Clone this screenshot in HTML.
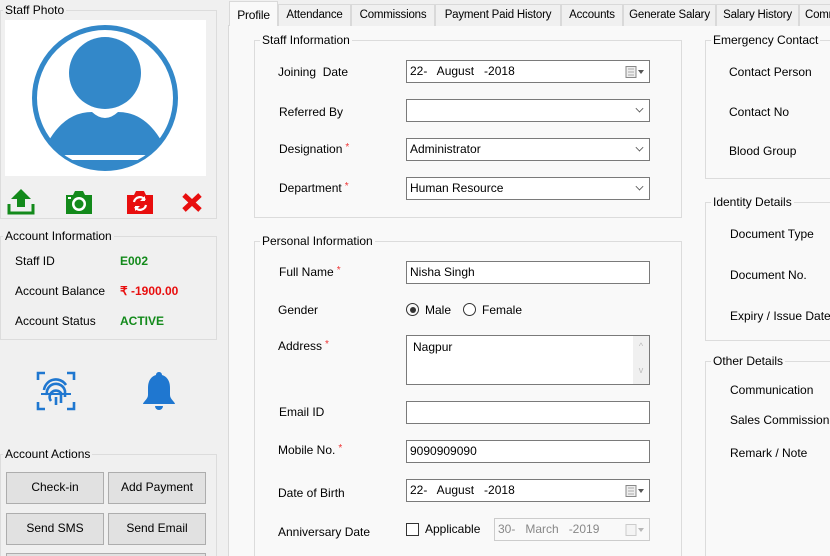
<!DOCTYPE html>
<html><head><meta charset="utf-8"><style>
*{box-sizing:border-box;margin:0;padding:0}
html{width:830px;height:556px;overflow:hidden}
body{width:830px;height:556px;overflow:hidden;background:#f0f0f0;font-family:"Liberation Sans",sans-serif;font-size:12px;color:#000;position:relative}
.a{position:absolute;white-space:nowrap}
.gb{position:absolute;border:1px solid #dcdcdc}
.gt{position:absolute;padding:0 2px;font-size:12px;top:-8px;left:2px;background:#f0f0f0}
.tp .gt{background:#f9f9f9}
.in{position:absolute;background:#fff;border:1px solid #7a7a7a;height:23px;padding:3px 3px;font-size:12px}
.btn{position:absolute;background:#e1e1e1;border:1px solid #adadad;text-align:center;line-height:29px;font-size:12px;width:98px;height:32px}
.tab{position:absolute;top:4px;height:22px;border:1px solid #d9d9d9;border-bottom:none;background:#f0f0f0;line-height:20px;font-size:11.5px;text-align:center;overflow:hidden;letter-spacing:-0.2px}
.req{color:#e33;font-size:10px;vertical-align:top;margin-left:3px}
.dd{position:absolute;right:6px;top:5px;width:7px;height:7px;border-right:1px solid #555;border-bottom:1px solid #555;transform:rotate(45deg) scale(.8)}
.cal{position:absolute;right:4px;top:5px;width:20px;height:12px}
.ob{border-bottom:none}
</style></head><body>

<div class="gb" style="left:0;top:10px;width:217px;height:209px"><span class="gt">Staff Photo</span></div>
<div class="a" style="left:5px;top:20px;width:201px;height:156px;background:#fff"></div>
<svg class="a" style="left:30px;top:24px" width="150" height="148" viewBox="0 0 150 148">
<defs><clipPath id="c"><circle cx="75" cy="74" r="70"/></clipPath></defs>
<circle cx="75" cy="74" r="70.5" fill="none" stroke="#3388c9" stroke-width="5"/>
<circle cx="75" cy="49" r="36" fill="#3388c9"/>
<path d="M18 118 Q35 88 62 88 Q75 100 88 88 Q115 88 132 118 L132 148 L18 148 Z" fill="#3388c9" clip-path="url(#c)"/>
<rect x="20" y="131" width="110" height="5" fill="#fff" clip-path="url(#c)"/>
</svg>
<svg class="a" style="left:7px;top:188px" width="28" height="27" viewBox="0 0 28 27"><path d="M14 1 L24 11 H18 V19 H10 V11 H4 Z" fill="#138a1b"/><path d="M2 16 V25 H26 V16" fill="none" stroke="#138a1b" stroke-width="3"/></svg>
<svg class="a" style="left:64px;top:189px" width="30" height="26" viewBox="0 0 30 26"><path d="M2 6 H9 L11 2 H19 L21 6 H28 V25 H2 Z" fill="#138a1b"/><circle cx="15" cy="15" r="7" fill="#fff"/><circle cx="15" cy="15" r="4.5" fill="#138a1b"/><rect x="4" y="8" width="3" height="2" fill="#fff"/></svg>
<svg class="a" style="left:125px;top:189px" width="30" height="26" viewBox="0 0 30 26"><path d="M2 6 H9 L11 2 H19 L21 6 H28 V25 H2 Z" fill="#e80e0e"/><path d="M9 13 A6 6 0 0 1 20 11 M21 16 A6 6 0 0 1 10 18" fill="none" stroke="#fff" stroke-width="2.2"/><path d="M20 7 V12 H15 Z M10 22 V17 H15 Z" fill="#fff"/></svg>
<svg class="a" style="left:181px;top:192px" width="22" height="21" viewBox="0 0 22 21"><path d="M3 3 L19 18 M19 3 L3 18" stroke="#e80e0e" stroke-width="5"/></svg>

<div class="gb" style="left:0;top:236px;width:217px;height:104px"><span class="gt">Account Information</span></div>
<div class="a" style="left:15px;top:254px">Staff ID</div>
<div class="a" style="left:120px;top:254px;color:#138a1b;font-weight:bold">E002</div>
<div class="a" style="left:15px;top:284px">Account Balance</div>
<div class="a" style="left:120px;top:284px;color:#e80e0e;font-weight:bold">₹ -1900.00</div>
<div class="a" style="left:15px;top:314px">Account Status</div>
<div class="a" style="left:120px;top:314px;color:#138a1b;font-weight:bold">ACTIVE</div>

<svg class="a" style="left:36px;top:371px" width="40" height="40" viewBox="0 0 40 40" fill="none" stroke="#1f77d0" stroke-width="2.6">
<path d="M2 9 V2 H9 M31 2 H38 V9 M2 31 V38 H9 M31 38 H38 V31"/>
<path d="M8 19 A12 12 0 0 1 30 14"/><path d="M11 24 A9 9 0 0 1 29 20 V26"/><path d="M15 30 A5 5 0 0 1 25 22 V32"/><path d="M20 26 V34"/><path d="M5 23 H35" stroke-width="2"/>
</svg>
<svg class="a" style="left:141px;top:371px" width="36" height="41" viewBox="0 0 36 41"><path d="M18 1 C21 1 21 4 21 4 C27 6 29 11 29 17 V24 C29 28 34 31 34 33 H2 C2 31 7 28 7 24 V17 C7 11 9 6 15 4 C15 4 15 1 18 1 Z" fill="#1f77d0"/><path d="M14 35 H22 A4 4 0 0 1 14 35 Z" fill="#1f77d0"/></svg>

<div class="gb ob" style="left:0;top:454px;width:217px;height:102px"><span class="gt">Account Actions</span></div>
<div class="btn" style="left:6px;top:472px">Check-in</div>
<div class="btn" style="left:108px;top:472px">Add Payment</div>
<div class="btn" style="left:6px;top:513px">Send SMS</div>
<div class="btn" style="left:108px;top:513px">Send Email</div>
<div class="btn" style="left:6px;top:553px;width:200px;height:3px;border-bottom:none"></div>

<div class="a" style="left:228px;top:25px;width:602px;height:531px;background:#f9f9f9;border:1px solid #d9d9d9;border-bottom:none;border-right:none"></div>
<div class="tab" style="left:229px;top:1px;width:49px;height:25px;background:#f9f9f9;padding-top:3px;font-size:12px">Profile</div>
<div class="tab" style="left:278px;width:73px">Attendance</div>
<div class="tab" style="left:351px;width:84px">Commissions</div>
<div class="tab" style="left:435px;width:126px">Payment Paid History</div>
<div class="tab" style="left:561px;width:62px">Accounts</div>
<div class="tab" style="left:623px;width:93px">Generate Salary</div>
<div class="tab" style="left:716px;width:83px">Salary History</div>
<div class="tab" style="left:799px;width:31px;text-align:left;padding-left:5px;border-right:none">Commi</div>

<div class="tp">
<div class="gb" style="left:254px;top:40px;width:428px;height:178px;background:#f9f9f9"><span class="gt" style="left:5px">Staff Information</span></div>
<div class="gb ob" style="left:254px;top:241px;width:428px;height:315px;background:#f9f9f9"><span class="gt" style="left:5px">Personal Information</span></div>
<div class="gb" style="left:705px;top:40px;width:125px;height:139px;background:#f9f9f9;border-right:none"><span class="gt" style="left:5px">Emergency Contact</span></div>
<div class="gb" style="left:705px;top:202px;width:125px;height:139px;background:#f9f9f9;border-right:none"><span class="gt" style="left:5px">Identity Details</span></div>
<div class="gb ob" style="left:705px;top:361px;width:125px;height:195px;background:#f9f9f9;border-right:none"><span class="gt" style="left:5px">Other Details</span></div>
</div>

<div class="a" style="left:278px;top:65px">Joining&nbsp; Date</div>
<div class="in" style="left:406px;top:60px;width:244px">22-&nbsp;&nbsp; August&nbsp;&nbsp; -2018
<svg class="cal" viewBox="0 0 20 12"><rect x="1" y="0.5" width="10" height="11" fill="#eee" stroke="#888"/><path d="M3 3H9M3 6H9M3 9H9" stroke="#aaa"/><path d="M13 4H19L16 8Z" fill="#555"/></svg></div>
<div class="a" style="left:279px;top:105px">Referred By</div>
<div class="in" style="left:406px;top:99px;width:244px"><span class="dd"></span></div>
<div class="a" style="left:279px;top:142px">Designation<span class="req">*</span></div>
<div class="in" style="left:406px;top:138px;width:244px">Administrator<span class="dd"></span></div>
<div class="a" style="left:279px;top:181px">Department<span class="req">*</span></div>
<div class="in" style="left:406px;top:177px;width:244px">Human Resource<span class="dd"></span></div>

<div class="a" style="left:279px;top:265px">Full Name<span class="req">*</span></div>
<div class="in" style="left:406px;top:261px;width:244px">Nisha Singh</div>
<div class="a" style="left:278px;top:303px">Gender</div>
<div class="a" style="left:406px;top:303px;width:13px;height:13px;border:1px solid #333;border-radius:50%"><div style="margin:2.5px;width:6px;height:6px;border-radius:50%;background:#333"></div></div>
<div class="a" style="left:425px;top:303px">Male</div>
<div class="a" style="left:463px;top:303px;width:13px;height:13px;border:1px solid #333;border-radius:50%;background:#fff"></div>
<div class="a" style="left:482px;top:303px">Female</div>
<div class="a" style="left:278px;top:339px">Address<span class="req">*</span></div>
<div class="in" style="left:406px;top:335px;width:244px;height:50px;padding:4px 6px">Nagpur
<div class="a" style="right:0;top:0;width:16px;height:48px;background:#f0f0f0;color:#bbb;font-size:9px;text-align:center;line-height:12px;padding-top:4px">^<br><br>v</div></div>
<div class="a" style="left:279px;top:405px">Email ID</div>
<div class="in" style="left:406px;top:401px;width:244px"></div>
<div class="a" style="left:278px;top:443px">Mobile No.<span class="req">*</span></div>
<div class="in" style="left:406px;top:440px;width:244px">9090909090</div>
<div class="a" style="left:278px;top:486px">Date of Birth</div>
<div class="in" style="left:406px;top:479px;width:244px">22-&nbsp;&nbsp; August&nbsp;&nbsp; -2018
<svg class="cal" viewBox="0 0 20 12"><rect x="1" y="0.5" width="10" height="11" fill="#eee" stroke="#888"/><path d="M3 3H9M3 6H9M3 9H9" stroke="#aaa"/><path d="M13 4H19L16 8Z" fill="#555"/></svg></div>
<div class="a" style="left:278px;top:525px">Anniversary Date</div>
<div class="a" style="left:406px;top:523px;width:13px;height:13px;border:1px solid #333;background:#fff"></div>
<div class="a" style="left:425px;top:522px">Applicable</div>
<div class="in" style="left:494px;top:518px;width:156px;border-color:#ccc;background:#f9f9f9;color:#888">30-&nbsp;&nbsp; March&nbsp;&nbsp; -2019
<svg class="cal" viewBox="0 0 20 12" style="opacity:.4"><rect x="1" y="0.5" width="10" height="11" fill="#eee" stroke="#888"/><path d="M13 4H19L16 8Z" fill="#555"/></svg></div>

<div class="a" style="left:729px;top:65px">Contact Person</div>
<div class="a" style="left:729px;top:105px">Contact No</div>
<div class="a" style="left:729px;top:144px">Blood Group</div>
<div class="a" style="left:730px;top:227px">Document Type</div>
<div class="a" style="left:730px;top:268px">Document No.</div>
<div class="a" style="left:730px;top:309px">Expiry / Issue Date</div>
<div class="a" style="left:730px;top:383px">Communication</div>
<div class="a" style="left:730px;top:413px">Sales Commission</div>
<div class="a" style="left:730px;top:446px">Remark / Note</div>
</body></html>
